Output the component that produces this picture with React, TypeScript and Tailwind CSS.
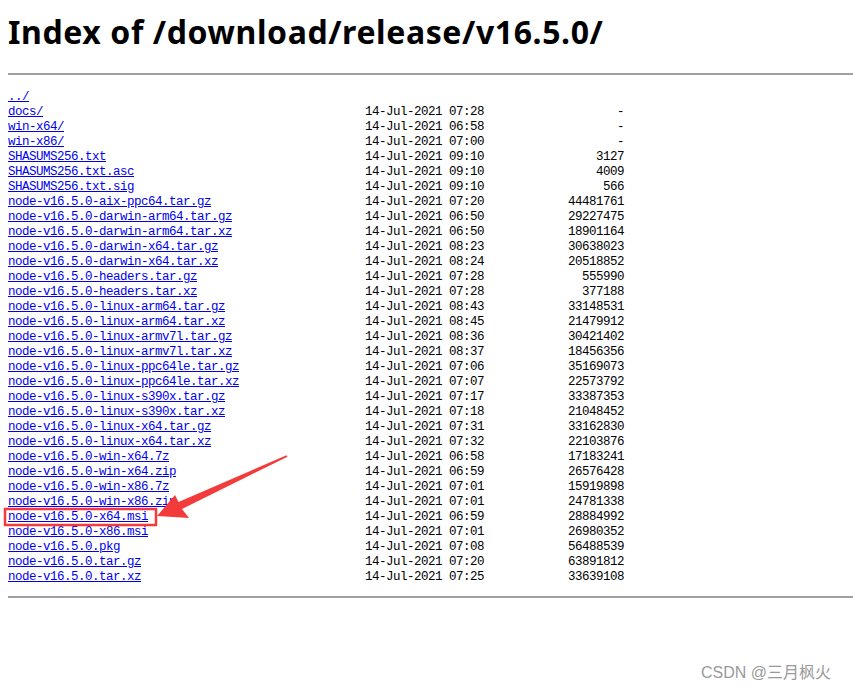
const files: [string, string, string][] = [
  ["docs/", "07:28", "-"],
  ["win-x64/", "06:58", "-"],
  ["win-x86/", "07:00", "-"],
  ["SHASUMS256.txt", "09:10", "3127"],
  ["SHASUMS256.txt.asc", "09:10", "4009"],
  ["SHASUMS256.txt.sig", "09:10", "566"],
  ["node-v16.5.0-aix-ppc64.tar.gz", "07:20", "44481761"],
  ["node-v16.5.0-darwin-arm64.tar.gz", "06:50", "29227475"],
  ["node-v16.5.0-darwin-arm64.tar.xz", "06:50", "18901164"],
  ["node-v16.5.0-darwin-x64.tar.gz", "08:23", "30638023"],
  ["node-v16.5.0-darwin-x64.tar.xz", "08:24", "20518852"],
  ["node-v16.5.0-headers.tar.gz", "07:28", "555990"],
  ["node-v16.5.0-headers.tar.xz", "07:28", "377188"],
  ["node-v16.5.0-linux-arm64.tar.gz", "08:43", "33148531"],
  ["node-v16.5.0-linux-arm64.tar.xz", "08:45", "21479912"],
  ["node-v16.5.0-linux-armv7l.tar.gz", "08:36", "30421402"],
  ["node-v16.5.0-linux-armv7l.tar.xz", "08:37", "18456356"],
  ["node-v16.5.0-linux-ppc64le.tar.gz", "07:06", "35169073"],
  ["node-v16.5.0-linux-ppc64le.tar.xz", "07:07", "22573792"],
  ["node-v16.5.0-linux-s390x.tar.gz", "07:17", "33387353"],
  ["node-v16.5.0-linux-s390x.tar.xz", "07:18", "21048452"],
  ["node-v16.5.0-linux-x64.tar.gz", "07:31", "33162830"],
  ["node-v16.5.0-linux-x64.tar.xz", "07:32", "22103876"],
  ["node-v16.5.0-win-x64.7z", "06:58", "17183241"],
  ["node-v16.5.0-win-x64.zip", "06:59", "26576428"],
  ["node-v16.5.0-win-x86.7z", "07:01", "15919898"],
  ["node-v16.5.0-win-x86.zip", "07:01", "24781338"],
  ["node-v16.5.0-x64.msi", "06:59", "28884992"],
  ["node-v16.5.0-x86.msi", "07:01", "26980352"],
  ["node-v16.5.0.pkg", "07:08", "56488539"],
  ["node-v16.5.0.tar.gz", "07:20", "63891812"],
  ["node-v16.5.0.tar.xz", "07:25", "33639108"],
];

export default function App() {
  return (
    <div className="relative h-[692px] overflow-hidden bg-white text-black">
      <h1 className="pl-2 pt-[13px] text-[32px] leading-[38px] font-bold tracking-[0.6px] font-['Noto_Sans',sans-serif]">
        Index of /download/release/v16.5.0/
      </h1>
      <div className="ml-2 mt-[22px] h-[2px] bg-[#a0a0a0]" />

      <div className="pl-2 pt-[15px] pb-[11px] font-['Liberation_Mono',monospace] text-[12.5px] leading-[15px] tracking-[-0.5px]">
        <div>
          <a href="#" className="text-[#0000ee] underline">../</a>
        </div>
        {files.map(([name, time, size]) => (
          <div key={name} className="grid grid-cols-[357px_119px_140px] whitespace-pre">
            <a href="#" className="justify-self-start text-[#0000ee] underline">{name}</a>
            <span>14-Jul-2021 {time}</span>
            <span className="text-right">{size}</span>
          </div>
        ))}
      </div>
      <div className="ml-2 h-[2px] bg-[#a0a0a0]" />

      {/* annotation: red box + arrow */}
      <svg className="pointer-events-none absolute left-0 top-0" width="853" height="692">
        <rect x="5" y="509" width="151" height="16" fill="none" stroke="#f33b3b" strokeWidth="2.5" />
        <polygon
          points="157,516 175,495 178.5,502 286.5,455.3 287.5,456.7 182,509 189,518"
          fill="#f33b3b"
        />
      </svg>

      <div className="absolute left-[701px] top-[664px] text-[16px] leading-[18px] text-[#9a9a9a] font-['Liberation_Sans','Noto_Sans_CJK_SC',sans-serif]">
        CSDN @三月枫火
      </div>
    </div>
  );
}
